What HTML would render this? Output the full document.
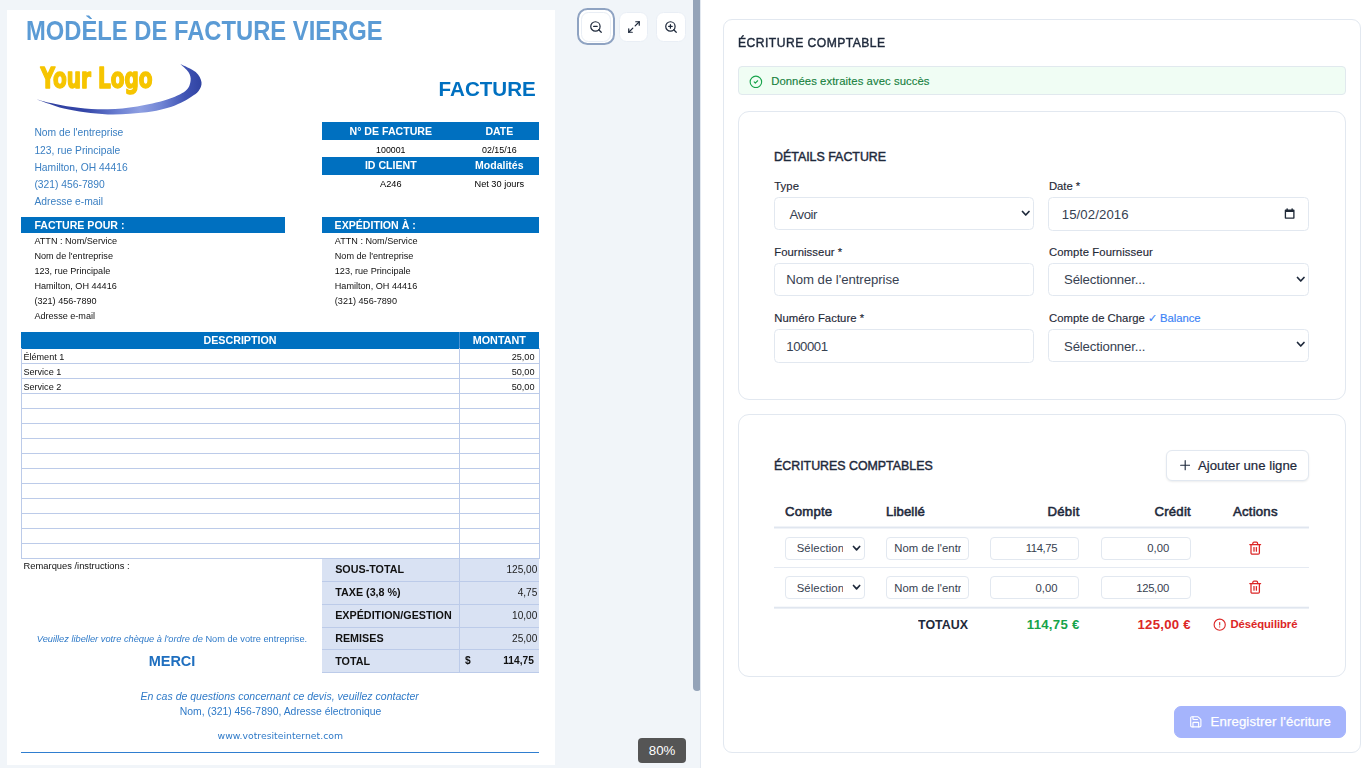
<!DOCTYPE html>
<html lang="fr">
<head>
<meta charset="utf-8">
<title>Écriture comptable</title>
<style>
html,body{margin:0;padding:0}
body{width:1366px;height:768px;overflow:hidden;position:relative;background:#fff;font-family:"Liberation Sans",sans-serif;color:#1e293b}
.a{position:absolute}
.t{position:absolute;white-space:nowrap;line-height:1}
/* left viewer */
#left{left:0;top:0;width:700px;height:768px;background:#f1f5f9;border-right:1px solid #e2e8f0;overflow:hidden}
#thumb{left:693px;top:-6px;width:7.5px;height:697px;background:#94a3b8;border-radius:4px}
#page{left:7px;top:10px;width:548.3px;height:754.7px;background:#fff;overflow:hidden}
.zb{position:absolute;top:12.3px;width:27.5px;height:27.5px;background:#fff;border:1px solid #e9eef5;border-radius:7px}
#badge{left:638px;top:737.8px;width:48.2px;height:25px;background:#555;border-radius:4px;color:#fff;font-size:13.3px;text-align:center;line-height:26px}
/* right panel */
.card{position:absolute;border:1px solid #e2e8f0;background:#fff;box-sizing:border-box}
</style>
</head>
<body>
<div id="left" class="a">
  <div id="page" class="a">
    
  </div>
  <div id="inv" class="a" style="left:0;top:0;width:700px;height:768px;filter:blur(0.35px)">
<div class="t" style="top:16.60px;font-size:27.4px;color:#5b9bd5;font-weight:bold;left:25.6px;transform:scaleX(0.868);transform-origin:0 50%;">MODÈLE DE FACTURE VIERGE</div>
<svg class="a" style="left:20px;top:50px" width="200" height="70" viewBox="20 50 200 70">
<defs><linearGradient id="sw" x1="0" y1="0" x2="1" y2="0"><stop offset="0" stop-color="#2f3f9e"/><stop offset="0.3" stop-color="#3446a8"/><stop offset="0.5" stop-color="#6c80d2"/><stop offset="0.63" stop-color="#8fa0e2"/><stop offset="0.76" stop-color="#7084d4"/><stop offset="0.9" stop-color="#4054b4"/><stop offset="1" stop-color="#3043a2"/></linearGradient></defs>
<path d="M35.4 99 C37.7 99.8 44.2 102.2 49.0 103.8 C53.8 105.4 57.9 107.2 63.9 108.6 C69.9 110.0 77.7 111.3 85.0 112.3 C92.3 113.3 100.3 114.2 107.8 114.4 C115.3 114.7 122.7 114.3 130.0 113.8 C137.3 113.3 145.5 112.5 151.8 111.5 C158.1 110.5 163.1 109.3 168.0 107.8 C172.9 106.3 177.2 104.5 181.0 102.7 C184.8 100.9 188.1 99.0 191.0 97.0 C193.9 95.0 196.8 93.5 198.6 91.0 C200.3 88.5 202.0 85.4 201.5 82.2 C201.0 79.0 199.2 75.0 195.7 72.0 C192.2 69.0 182.9 65.2 180.3 63.9 C181.7 65.2 186.7 69.2 188.4 72.0 C190.1 74.8 191.1 77.5 190.6 80.7 C190.1 83.9 189.4 87.8 185.4 91.0 C181.4 94.2 174.5 97.2 166.4 99.8 C158.3 102.4 146.9 104.8 137.1 106.4 C127.3 108.0 117.5 109.1 107.8 109.3 C98.0 109.5 88.3 108.9 78.6 107.8 C68.8 106.7 56.5 104.2 49.3 102.7 C42.1 101.2 37.7 99.6 35.4 99.0 Z" fill="url(#sw)"/>
<text x="40.6" y="88.2" font-family="DejaVu Sans Condensed, DejaVu Sans, sans-serif" font-weight="bold" font-size="28" fill="#f6c500" stroke="#f6c500" stroke-width="1.4" stroke-linejoin="round" textLength="112" lengthAdjust="spacingAndGlyphs">Your Logo</text>
</svg>
<div class="t" style="top:78.60px;font-size:20.6px;color:#0070c0;font-weight:bold;right:164.20px;">FACTURE</div>
<div class="t" style="top:128.45px;font-size:10.3px;color:#3a7fc2;left:34.4px;">Nom de l'entreprise</div>
<div class="t" style="top:145.50px;font-size:10.3px;color:#3a7fc2;left:34.4px;">123, rue Principale</div>
<div class="t" style="top:162.55px;font-size:10.3px;color:#3a7fc2;left:34.4px;">Hamilton, OH 44416</div>
<div class="t" style="top:179.60px;font-size:10.3px;color:#3a7fc2;left:34.4px;">(321) 456-7890</div>
<div class="t" style="top:196.65px;font-size:10.3px;color:#3a7fc2;left:34.4px;">Adresse e-mail</div>
<div class="a" style="left:321.5px;top:122.2px;width:217.9px;height:17.8px;background:#0070c0"></div>
<div class="t" style="top:125.90px;font-size:10.6px;color:#fff;font-weight:bold;left:190.8px;width:400px;text-align:center;">N° DE FACTURE</div>
<div class="t" style="top:125.95px;font-size:10.5px;color:#fff;font-weight:bold;left:299.3px;width:400px;text-align:center;">DATE</div>
<div class="t" style="top:146.00px;font-size:8.8px;color:#000;left:190.8px;width:400px;text-align:center;">100001</div>
<div class="t" style="top:145.95px;font-size:8.9px;color:#000;left:299.3px;width:400px;text-align:center;">02/15/16</div>
<div class="a" style="left:321.5px;top:156.7px;width:217.9px;height:17.9px;background:#0070c0"></div>
<div class="t" style="top:160.30px;font-size:10.6px;color:#fff;font-weight:bold;left:190.8px;width:400px;text-align:center;">ID CLIENT</div>
<div class="t" style="top:160.35px;font-size:10.5px;color:#fff;font-weight:bold;left:299.3px;width:400px;text-align:center;">Modalités</div>
<div class="t" style="top:180.40px;font-size:9.2px;color:#000;left:190.8px;width:400px;text-align:center;">A246</div>
<div class="t" style="top:180.40px;font-size:9.2px;color:#000;left:299.3px;width:400px;text-align:center;">Net 30 jours</div>
<div class="a" style="left:21.4px;top:217.4px;width:264px;height:15.5px;background:#0070c0"></div>
<div class="t" style="top:220.00px;font-size:10.6px;color:#fff;font-weight:bold;left:34.4px;">FACTURE POUR :</div>
<div class="a" style="left:321.8px;top:217.4px;width:217.6px;height:15.5px;background:#0070c0"></div>
<div class="t" style="top:220.00px;font-size:10.6px;color:#fff;font-weight:bold;left:334.6px;">EXPÉDITION À :</div>
<div class="t" style="top:236.95px;font-size:9.1px;color:#111;left:34.4px;">ATTN : Nom/Service</div>
<div class="t" style="top:236.95px;font-size:9.1px;color:#111;left:334.8px;">ATTN : Nom/Service</div>
<div class="t" style="top:251.95px;font-size:9.1px;color:#111;left:34.4px;">Nom de l'entreprise</div>
<div class="t" style="top:251.95px;font-size:9.1px;color:#111;left:334.8px;">Nom de l'entreprise</div>
<div class="t" style="top:266.95px;font-size:9.1px;color:#111;left:34.4px;">123, rue Principale</div>
<div class="t" style="top:266.95px;font-size:9.1px;color:#111;left:334.8px;">123, rue Principale</div>
<div class="t" style="top:281.95px;font-size:9.1px;color:#111;left:34.4px;">Hamilton, OH 44416</div>
<div class="t" style="top:281.95px;font-size:9.1px;color:#111;left:334.8px;">Hamilton, OH 44416</div>
<div class="t" style="top:296.95px;font-size:9.1px;color:#111;left:34.4px;">(321) 456-7890</div>
<div class="t" style="top:296.95px;font-size:9.1px;color:#111;left:334.8px;">(321) 456-7890</div>
<div class="t" style="top:311.95px;font-size:9.1px;color:#111;left:34.4px;">Adresse e-mail</div>
<div class="a" style="left:21.4px;top:332.3px;width:518px;height:16.5px;background:#0070c0"></div>
<div class="a" style="left:458.6px;top:332.3px;width:1px;height:16.5px;background:#4a93d3"></div>
<div class="t" style="top:335.15px;font-size:10.7px;color:#fff;font-weight:bold;left:40px;width:400px;text-align:center;">DESCRIPTION</div>
<div class="t" style="top:335.10px;font-size:10.8px;color:#fff;font-weight:bold;left:299.3px;width:400px;text-align:center;">MONTANT</div>
<div class="a" style="left:21.4px;top:362.90px;width:518px;height:1px;background:#bccbe9"></div>
<div class="a" style="left:21.4px;top:377.90px;width:518px;height:1px;background:#bccbe9"></div>
<div class="a" style="left:21.4px;top:392.90px;width:518px;height:1px;background:#bccbe9"></div>
<div class="a" style="left:21.4px;top:407.90px;width:518px;height:1px;background:#bccbe9"></div>
<div class="a" style="left:21.4px;top:422.90px;width:518px;height:1px;background:#bccbe9"></div>
<div class="a" style="left:21.4px;top:437.90px;width:518px;height:1px;background:#bccbe9"></div>
<div class="a" style="left:21.4px;top:452.90px;width:518px;height:1px;background:#bccbe9"></div>
<div class="a" style="left:21.4px;top:467.90px;width:518px;height:1px;background:#bccbe9"></div>
<div class="a" style="left:21.4px;top:482.90px;width:518px;height:1px;background:#bccbe9"></div>
<div class="a" style="left:21.4px;top:497.90px;width:518px;height:1px;background:#bccbe9"></div>
<div class="a" style="left:21.4px;top:512.90px;width:518px;height:1px;background:#bccbe9"></div>
<div class="a" style="left:21.4px;top:527.90px;width:518px;height:1px;background:#bccbe9"></div>
<div class="a" style="left:21.4px;top:542.90px;width:518px;height:1px;background:#bccbe9"></div>
<div class="a" style="left:21.4px;top:557.90px;width:518px;height:1px;background:#bccbe9"></div>
<div class="a" style="left:21.4px;top:348.4px;width:1px;height:210.2px;background:#bccbe9"></div>
<div class="a" style="left:538.9px;top:348.4px;width:1px;height:210.2px;background:#bccbe9"></div>
<div class="a" style="left:458.6px;top:348.4px;width:1px;height:210.0px;background:#bccbe9"></div>
<div class="t" style="top:352.95px;font-size:9.1px;color:#111;left:23.4px;">Élément 1</div>
<div class="t" style="top:352.93px;font-size:9.15px;color:#111;right:165.50px;">25,00</div>
<div class="t" style="top:367.95px;font-size:9.1px;color:#111;left:23.4px;">Service 1</div>
<div class="t" style="top:367.93px;font-size:9.15px;color:#111;right:165.50px;">50,00</div>
<div class="t" style="top:382.95px;font-size:9.1px;color:#111;left:23.4px;">Service 2</div>
<div class="t" style="top:382.93px;font-size:9.15px;color:#111;right:165.50px;">50,00</div>
<div class="t" style="top:562.23px;font-size:9.35px;color:#111;left:23.6px;">Remarques /instructions :</div>
<div class="a" style="left:321.5px;top:558.5px;width:217.9px;height:114.1px;background:#d9e2f3"></div>
<div class="a" style="left:321.5px;top:580.8px;width:217.9px;height:1px;background:#bccbe9"></div>
<div class="a" style="left:321.5px;top:603.6px;width:217.9px;height:1px;background:#bccbe9"></div>
<div class="a" style="left:321.5px;top:626.5px;width:217.9px;height:1px;background:#bccbe9"></div>
<div class="a" style="left:321.5px;top:649.3px;width:217.9px;height:1px;background:#bccbe9"></div>
<div class="a" style="left:458.6px;top:558.5px;width:1px;height:114.1px;background:#bccbe9"></div>
<div class="a" style="left:321.5px;top:672.1px;width:217.9px;height:1px;background:#bccbe9"></div>
<div class="t" style="top:564.33px;font-size:10.75px;color:#111;font-weight:bold;left:335.2px;">SOUS-TOTAL</div>
<div class="t" style="top:565.46px;font-size:10.1px;color:#222;right:162.70px;">125,00</div>
<div class="t" style="top:587.15px;font-size:10.75px;color:#111;font-weight:bold;left:335.2px;">TAXE (3,8 %)</div>
<div class="t" style="top:588.28px;font-size:10.1px;color:#222;right:162.70px;">4,75</div>
<div class="t" style="top:609.97px;font-size:10.75px;color:#111;font-weight:bold;left:335.2px;">EXPÉDITION/GESTION</div>
<div class="t" style="top:611.10px;font-size:10.1px;color:#222;right:162.70px;">10,00</div>
<div class="t" style="top:632.79px;font-size:10.75px;color:#111;font-weight:bold;left:335.2px;">REMISES</div>
<div class="t" style="top:633.92px;font-size:10.1px;color:#222;right:162.70px;">25,00</div>
<div class="t" style="top:655.61px;font-size:10.75px;color:#111;font-weight:bold;left:335.2px;">TOTAL</div>
<div class="t" style="top:655.89px;font-size:10.2px;color:#111;font-weight:bold;left:465px;">$</div>
<div class="t" style="top:655.89px;font-size:10.2px;color:#111;font-weight:bold;right:166.20px;">114,75</div>
<div class="t" style="top:634.77px;font-size:9.25px;color:#2f7ac8;font-style:italic;left:-28px;width:400px;text-align:center;">Veuillez libeller votre chèque à l'ordre de <span style="font-style:normal">Nom de votre entreprise.</span></div>
<div class="t" style="top:653.75px;font-size:14.5px;color:#1f6fbf;font-weight:bold;left:-28px;width:400px;text-align:center;">MERCI</div>
<div class="t" style="top:690.53px;font-size:10.53px;color:#2f7ac8;font-style:italic;left:79.69999999999999px;width:400px;text-align:center;">En cas de questions concernant ce devis, veuillez contacter</div>
<div class="t" style="top:706.70px;font-size:10.4px;color:#2f7ac8;left:80.5px;width:400px;text-align:center;">Nom, (321) 456-7890, Adresse électronique</div>
<div class="t" style="top:731.35px;font-size:9.3px;color:#2f7ac8;left:80.30000000000001px;width:400px;text-align:center;font-family:'DejaVu Sans',sans-serif;">www.votresiteinternet.com</div>
<div class="a" style="left:21.4px;top:751.5px;width:518px;height:1.5px;background:#2f7ed0"></div>
</div>
<div class="a" style="left:577.3px;top:7.9px;width:37.4px;height:37.4px;box-sizing:border-box;border:2px solid #8fa3c2;border-radius:10.5px;background:#fff"></div>
<div class="a" style="left:581.1px;top:11.9px;width:29.8px;height:29.8px;box-sizing:border-box;background:#fff;border:1px solid #e9eef5;border-radius:7.5px"></div>
<div class="a" style="left:618.7px;top:11.9px;width:29.8px;height:29.8px;box-sizing:border-box;background:#fff;border:1px solid #e9eef5;border-radius:7.5px"></div>
<div class="a" style="left:656.3px;top:11.9px;width:29.8px;height:29.8px;box-sizing:border-box;background:#fff;border:1px solid #e9eef5;border-radius:7.5px"></div>
<svg class="a" style="left:588.9px;top:19.7px" width="14" height="14" viewBox="0 0 24 24" fill="none" stroke="#1e293b" stroke-width="2.1" stroke-linecap="round" stroke-linejoin="round"><circle cx="11" cy="11" r="8"/><line x1="21" y1="21" x2="16.65" y2="16.65"/><line x1="8" y1="11" x2="14" y2="11"/></svg>
<svg class="a" style="left:626.5px;top:19.7px" width="14" height="14" viewBox="0 0 24 24" fill="none" stroke="#1e293b" stroke-width="2.1" stroke-linecap="round" stroke-linejoin="round"><polyline points="15 3 21 3 21 9"/><polyline points="9 21 3 21 3 15"/><line x1="21" y1="3" x2="14" y2="10"/><line x1="3" y1="21" x2="10" y2="14"/></svg>
<svg class="a" style="left:664.1px;top:19.7px" width="14" height="14" viewBox="0 0 24 24" fill="none" stroke="#1e293b" stroke-width="2.1" stroke-linecap="round" stroke-linejoin="round"><circle cx="11" cy="11" r="8"/><line x1="21" y1="21" x2="16.65" y2="16.65"/><line x1="11" y1="8" x2="11" y2="14"/><line x1="8" y1="11" x2="14" y2="11"/></svg>

  <div id="thumb" class="a"></div>
  <div id="badge" class="a">80%</div>
</div>
<div id="right">
  <div class="a" style="left:723.3px;top:19.2px;width:637.70px;height:733.80px;box-sizing:border-box;border:1px solid #e2e8f0;border-radius:9px;background:#fff;"></div>
<div class="t" style="top:36.03px;font-size:13.2px;color:#1e293b;left:738.0px;-webkit-text-stroke:0.45px #1e293b;letter-spacing:0.5px;transform:scaleX(0.92);transform-origin:0 50%;">ÉCRITURE COMPTABLE</div>
<div class="a" style="left:738px;top:66.3px;width:607.50px;height:29.00px;box-sizing:border-box;border:1px solid #e1e9ee;border-radius:4px;background:#f0fdf4;"></div>
<svg class="a" style="left:748.9px;top:74.6px" width="13.8" height="13.8" viewBox="0 0 24 24" fill="none" stroke="#16a34a" stroke-width="1.9" stroke-linecap="round" stroke-linejoin="round"><circle cx="12" cy="12" r="10"/><path d="m9 12 2 2 4-4"/></svg>
<div class="t" id="t1" style="top:76.13px;font-size:11.3px;color:#15803d;letter-spacing:0.068px;left:771.2px;-webkit-text-stroke:0.12px #15803d;">Données extraites avec succès</div>
<div class="a" style="left:738px;top:110.8px;width:607.50px;height:289.60px;box-sizing:border-box;border:1px solid #e2e8f0;border-radius:11px;background:#fff;"></div>
<div class="t" id="t2" style="top:149.63px;font-size:13.2px;color:#1e293b;left:774.0px;transform:scaleX(0.9404);transform-origin:0 50%;-webkit-text-stroke:0.45px #1e293b;">DÉTAILS FACTURE</div>
<div class="t" id="t3" style="top:181.13px;font-size:11.3px;color:#1f2937;letter-spacing:0.101px;left:774.2px;-webkit-text-stroke:0.15px #1f2937;">Type</div>
<div class="t" id="t4" style="top:181.13px;font-size:11.3px;color:#1f2937;letter-spacing:-0.041px;left:1049.0px;-webkit-text-stroke:0.15px #1f2937;">Date *</div>
<div class="t" id="t5" style="top:246.93px;font-size:11.3px;color:#1f2937;letter-spacing:0.067px;left:774.2px;-webkit-text-stroke:0.15px #1f2937;">Fournisseur *</div>
<div class="t" id="t6" style="top:246.93px;font-size:11.3px;color:#1f2937;letter-spacing:0.084px;left:1049.0px;-webkit-text-stroke:0.15px #1f2937;">Compte Fournisseur</div>
<div class="t" id="t7" style="top:313.13px;font-size:11.3px;color:#1f2937;letter-spacing:0.055px;left:774.2px;-webkit-text-stroke:0.15px #1f2937;">Numéro Facture *</div>
<div class="t" id="t8" style="top:313.13px;font-size:11.3px;color:#1f2937;letter-spacing:0.022px;left:1049.0px;-webkit-text-stroke:0.15px #1f2937;">Compte de Charge <span style="color:#3b82f6;-webkit-text-stroke:0.15px #3b82f6;letter-spacing:-0.05px">✓ Balance</span></div>
<div class="a" style="left:774.2px;top:197px;width:259.55px;height:32.50px;box-sizing:border-box;border:1px solid #e2e8f0;border-radius:4.5px;background:#fff;"></div>
<div class="t" id="t9" style="top:207.63px;font-size:13.2px;color:#374151;letter-spacing:-0.459px;left:789.5px;">Avoir</div>
<svg class="a" style="left:1021.25px;top:209.85px" width="9.50" height="6.50" viewBox="-1.5 -1.5 9.50 6.50"><path d="M0 0 L3.25 3.50 L6.50 0" fill="none" stroke="#1e293b" stroke-width="1.7" stroke-linecap="round" stroke-linejoin="round"/></svg>
<div class="a" style="left:1048.3px;top:197px;width:260.45px;height:33.50px;box-sizing:border-box;border:1px solid #e2e8f0;border-radius:4.5px;background:#fff;"></div>
<div class="t" id="t10" style="top:207.63px;font-size:13.2px;color:#374151;letter-spacing:0.104px;left:1061.7px;">15/02/2016</div>
<svg class="a" style="left:1283.5px;top:207.7px" width="11.3" height="11.6" viewBox="0 0 12 12"><path d="M1.6 1.4 H10.4 Q11.2 1.4 11.2 2.2 V10.4 Q11.2 11.2 10.4 11.2 H1.6 Q0.8 11.2 0.8 10.4 V2.2 Q0.8 1.4 1.6 1.4 Z M2.2 4.2 V9.9 H9.8 V4.2 Z" fill="#1f2937" fill-rule="evenodd"/><rect x="2.6" y="0.3" width="1.5" height="2" fill="#1f2937"/><rect x="7.9" y="0.3" width="1.5" height="2" fill="#1f2937"/></svg>
<div class="a" style="left:774.2px;top:263.25px;width:259.55px;height:33.00px;box-sizing:border-box;border:1px solid #e2e8f0;border-radius:4.5px;background:#fff;"></div>
<div class="t" id="t11" style="top:273.43px;font-size:13.2px;color:#374151;letter-spacing:-0.047px;left:786.3px;">Nom de l'entreprise</div>
<div class="a" style="left:1048.3px;top:263.25px;width:260.45px;height:32.25px;box-sizing:border-box;border:1px solid #e2e8f0;border-radius:4.5px;background:#fff;"></div>
<div class="t" id="t12" style="top:273.43px;font-size:13.2px;color:#374151;letter-spacing:-0.154px;left:1064px;">Sélectionner...</div>
<svg class="a" style="left:1296.25px;top:275.55px" width="9.50" height="6.50" viewBox="-1.5 -1.5 9.50 6.50"><path d="M0 0 L3.25 3.50 L6.50 0" fill="none" stroke="#1e293b" stroke-width="1.7" stroke-linecap="round" stroke-linejoin="round"/></svg>
<div class="a" style="left:774.2px;top:329.25px;width:259.55px;height:33.25px;box-sizing:border-box;border:1px solid #e2e8f0;border-radius:4.5px;background:#fff;"></div>
<div class="t" id="t13" style="top:339.63px;font-size:13.2px;color:#374151;letter-spacing:-0.450px;left:786.3px;">100001</div>
<div class="a" style="left:1048.3px;top:329.25px;width:260.45px;height:32.75px;box-sizing:border-box;border:1px solid #e2e8f0;border-radius:4.5px;background:#fff;"></div>
<div class="t" id="t14" style="top:339.63px;font-size:13.2px;color:#374151;letter-spacing:-0.154px;left:1064px;">Sélectionner...</div>
<svg class="a" style="left:1296.25px;top:341.45px" width="9.50" height="6.50" viewBox="-1.5 -1.5 9.50 6.50"><path d="M0 0 L3.25 3.50 L6.50 0" fill="none" stroke="#1e293b" stroke-width="1.7" stroke-linecap="round" stroke-linejoin="round"/></svg>
<div class="a" style="left:738px;top:414.3px;width:607.50px;height:262.40px;box-sizing:border-box;border:1px solid #e2e8f0;border-radius:11px;background:#fff;"></div>
<div class="t" id="t15" style="top:458.83px;font-size:13.2px;color:#1e293b;left:774.0px;transform:scaleX(0.9386);transform-origin:0 50%;-webkit-text-stroke:0.45px #1e293b;">ÉCRITURES COMPTABLES</div>
<div class="a" style="left:1166.25px;top:450px;width:142.50px;height:30.60px;box-sizing:border-box;border:1px solid #e2e8f0;border-radius:6px;background:#fff;box-shadow:0 1px 2px rgba(15,23,42,0.08);"></div>
<svg class="a" style="left:1179.8px;top:460.4px" width="10.4" height="10.4" viewBox="0 0 11 11"><path d="M5.5 0.7 V10.3 M0.7 5.5 H10.3" stroke="#1e293b" stroke-width="1.2" stroke-linecap="round"/></svg>
<div class="t" id="t16" style="top:458.83px;font-size:13.2px;color:#1e293b;letter-spacing:0.008px;left:1198px;-webkit-text-stroke:0.2px #1e293b;">Ajouter une ligne</div>
<div class="t" id="t17" style="top:504.93px;font-size:13.2px;color:#1e293b;letter-spacing:0.216px;left:784.9px;-webkit-text-stroke:0.55px #1e293b;">Compte</div>
<div class="t" id="t18" style="top:504.93px;font-size:13.2px;color:#1e293b;letter-spacing:0.106px;left:886.0px;-webkit-text-stroke:0.55px #1e293b;">Libellé</div>
<div class="t" id="t19" style="top:504.93px;font-size:13.2px;color:#1e293b;letter-spacing:0.296px;right:286.30px;-webkit-text-stroke:0.55px #1e293b;">Débit</div>
<div class="t" id="t20" style="top:504.93px;font-size:13.2px;color:#1e293b;letter-spacing:0.198px;right:175.10px;-webkit-text-stroke:0.55px #1e293b;">Crédit</div>
<div class="t" id="t21" style="top:504.93px;font-size:13.2px;color:#1e293b;letter-spacing:0.202px;left:1105.40px;width:300px;text-align:center;-webkit-text-stroke:0.55px #1e293b;">Actions</div>
<div class="a" style="left:774px;top:526px;width:535px;height:1px;background:#f0f3f8"></div>
<div class="a" style="left:774px;top:527px;width:535px;height:1px;background:#e0e6ef"></div>
<div class="a" style="left:774px;top:528px;width:535px;height:1px;background:#f0f3f8"></div>
<div class="a" style="left:774px;top:567px;width:535px;height:1px;background:#e5eaf2"></div>
<div class="a" style="left:774px;top:606px;width:535px;height:1px;background:#f6f8fb"></div>
<div class="a" style="left:774px;top:607px;width:535px;height:1px;background:#e0e6ef"></div>
<div class="a" style="left:774px;top:608px;width:535px;height:1px;background:#ebeff5"></div>
<div class="a" style="left:785.3px;top:536.6px;width:79.30px;height:23.00px;box-sizing:border-box;border:1px solid #e2e8f0;border-radius:4px;background:#fff;"></div>
<div class="a" style="left:796.7px;top:540.9px;width:46px;height:16px;overflow:hidden"><div class="t" style="left:0;top:2.43px;font-size:11.3px;letter-spacing:0.1px;color:#374151">Sélection</div></div>
<svg class="a" style="left:852.01px;top:545.14px" width="9.18" height="6.32" viewBox="-1.5 -1.5 9.18 6.32"><path d="M0 0 L3.09 3.32 L6.17 0" fill="none" stroke="#1e293b" stroke-width="1.7" stroke-linecap="round" stroke-linejoin="round"/></svg>
<div class="a" style="left:886.25px;top:537.1px;width:82.50px;height:22.50px;box-sizing:border-box;border:1px solid #e2e8f0;border-radius:4px;background:#fff;"></div>
<div class="a" style="left:894.2px;top:540.9px;width:67.3px;height:16px;overflow:hidden"><div class="t" style="left:0;top:2.43px;font-size:11.3px;letter-spacing:0.05px;color:#374151">Nom de l'entreprise</div></div>
<div class="a" style="left:990.2px;top:537.1px;width:89.05px;height:22.50px;box-sizing:border-box;border:1px solid #e2e8f0;border-radius:4px;background:#fff;"></div>
<div class="t" id="t22" style="top:543.33px;font-size:11.3px;color:#374151;letter-spacing:-0.385px;right:308.88px;">114,75</div>
<div class="a" style="left:1101.25px;top:537.1px;width:89.25px;height:22.50px;box-sizing:border-box;border:1px solid #e2e8f0;border-radius:4px;background:#fff;"></div>
<div class="t" id="t23" style="top:543.33px;font-size:11.3px;color:#374151;letter-spacing:0.002px;right:196.80px;">0,00</div>
<svg class="a" style="left:1248.25px;top:540.6px" width="14.4" height="14.4" viewBox="0 0 24 24" fill="none" stroke="#dc2626" stroke-width="2.1" stroke-linecap="round" stroke-linejoin="round"><path d="M3 6h18"/><path d="M19 6v14c0 1-1 2-2 2H7c-1 0-2-1-2-2V6"/><path d="M8 6V4c0-1 1-2 2-2h4c1 0 2 1 2 2v2"/><line x1="10" x2="10" y1="11" y2="17"/><line x1="14" x2="14" y1="11" y2="17"/></svg>
<div class="a" style="left:785.3px;top:575.7px;width:79.30px;height:23.00px;box-sizing:border-box;border:1px solid #e2e8f0;border-radius:4px;background:#fff;"></div>
<div class="a" style="left:796.7px;top:580.2px;width:46px;height:16px;overflow:hidden"><div class="t" style="left:0;top:2.43px;font-size:11.3px;letter-spacing:0.1px;color:#374151">Sélection</div></div>
<svg class="a" style="left:852.01px;top:584.24px" width="9.18" height="6.32" viewBox="-1.5 -1.5 9.18 6.32"><path d="M0 0 L3.09 3.32 L6.17 0" fill="none" stroke="#1e293b" stroke-width="1.7" stroke-linecap="round" stroke-linejoin="round"/></svg>
<div class="a" style="left:886.25px;top:576.2px;width:82.50px;height:22.50px;box-sizing:border-box;border:1px solid #e2e8f0;border-radius:4px;background:#fff;"></div>
<div class="a" style="left:894.2px;top:580.2px;width:67.3px;height:16px;overflow:hidden"><div class="t" style="left:0;top:2.43px;font-size:11.3px;letter-spacing:0.05px;color:#374151">Nom de l'entreprise</div></div>
<div class="a" style="left:990.2px;top:576.2px;width:89.05px;height:22.50px;box-sizing:border-box;border:1px solid #e2e8f0;border-radius:4px;background:#fff;"></div>
<div class="t" id="t24" style="top:582.63px;font-size:11.3px;color:#374151;letter-spacing:0.002px;right:308.50px;">0,00</div>
<div class="a" style="left:1101.25px;top:576.2px;width:89.25px;height:22.50px;box-sizing:border-box;border:1px solid #e2e8f0;border-radius:4px;background:#fff;"></div>
<div class="t" id="t25" style="top:582.63px;font-size:11.3px;color:#374151;letter-spacing:-0.312px;right:197.11px;">125,00</div>
<svg class="a" style="left:1248.25px;top:579.7px" width="14.4" height="14.4" viewBox="0 0 24 24" fill="none" stroke="#dc2626" stroke-width="2.1" stroke-linecap="round" stroke-linejoin="round"><path d="M3 6h18"/><path d="M19 6v14c0 1-1 2-2 2H7c-1 0-2-1-2-2V6"/><path d="M8 6V4c0-1 1-2 2-2h4c1 0 2 1 2 2v2"/><line x1="10" x2="10" y1="11" y2="17"/><line x1="14" x2="14" y1="11" y2="17"/></svg>
<div class="t" id="t26" style="top:617.83px;font-size:13.2px;color:#1e293b;font-weight:bold;right:398.00px;transform:scaleX(0.9426);transform-origin:100% 50%;">TOTAUX</div>
<div class="t" id="t27" style="top:617.83px;font-size:13.2px;color:#16a34a;font-weight:bold;letter-spacing:0.264px;right:286.49px;">114,75 €</div>
<div class="t" id="t28" style="top:617.83px;font-size:13.2px;color:#dc2626;font-weight:bold;letter-spacing:0.231px;right:175.27px;">125,00 €</div>
<svg class="a" style="left:1212.6px;top:618.3px" width="13.4" height="13.4" viewBox="0 0 24 24" fill="none" stroke="#dc2626" stroke-width="2" stroke-linecap="round" stroke-linejoin="round"><circle cx="12" cy="12" r="10"/><line x1="12" y1="8" x2="12" y2="12.5"/><line x1="12" y1="16" x2="12.01" y2="16"/></svg>
<div class="t" id="t29" style="top:618.83px;font-size:11.3px;color:#dc2626;font-weight:bold;letter-spacing:-0.075px;left:1230.5px;">Déséquilibré</div>
<div class="a" style="left:1174px;top:705.6px;width:171.50px;height:32.60px;box-sizing:border-box;border:1px solid #a5b4fc;border-radius:7px;background:#a5b4fc;"></div>
<svg class="a" style="left:1188.6px;top:715px" width="13.6" height="13.6" viewBox="0 0 24 24" fill="none" stroke="#fff" stroke-width="2" stroke-linecap="round" stroke-linejoin="round"><path d="M15.2 3a2 2 0 0 1 1.4.6l3.8 3.8a2 2 0 0 1 .6 1.4V19a2 2 0 0 1-2 2H5a2 2 0 0 1-2-2V5a2 2 0 0 1 2-2z"/><path d="M17 21v-7a1 1 0 0 0-1-1H8a1 1 0 0 0-1 1v7"/><path d="M7 3v4a1 1 0 0 0 1 1h7"/></svg>
<div class="t" id="t30" style="top:714.93px;font-size:13.2px;color:#fff;letter-spacing:0.134px;left:1210.5px;-webkit-text-stroke:0.25px #fff;">Enregistrer l'écriture</div>

</div>
</body>
</html>
